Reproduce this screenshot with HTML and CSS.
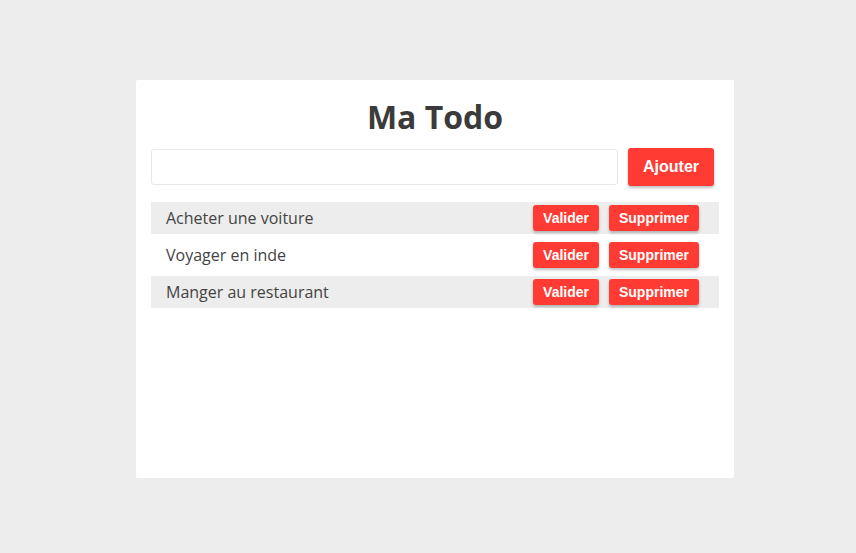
FILE: index.html
```html
<!DOCTYPE html>
<html lang="fr">
<head>
<meta charset="utf-8">
<title>Ma Todo</title>
<link rel="stylesheet" href="styles.css">
</head>
<body>
<main class="card">
  <h1 class="title">Ma Todo</h1>
  <form class="add-form">
    <input class="add-input" type="text">
    <button class="btn btn-add" type="button">Ajouter</button>
  </form>
  <ul class="list">
    <li class="item">
      <span class="item-text">Acheter une voiture</span>
      <span class="actions"><button class="btn btn-small">Valider</button><button class="btn btn-small">Supprimer</button></span>
    </li>
    <li class="item">
      <span class="item-text">Voyager en inde</span>
      <span class="actions"><button class="btn btn-small">Valider</button><button class="btn btn-small">Supprimer</button></span>
    </li>
    <li class="item">
      <span class="item-text">Manger au restaurant</span>
      <span class="actions"><button class="btn btn-small">Valider</button><button class="btn btn-small">Supprimer</button></span>
    </li>
  </ul>
</main>
</body>
</html>
```

FILE: styles.css
```css
* { box-sizing: border-box; }
html, body { margin: 0; padding: 0; }
body {
  background: #ededed;
  font-family: "Open Sans", sans-serif;
  height: 553px;
  padding-top: 80px;
}
.card {
  width: 598px;
  height: 398px;
  margin: 0 auto 0 136px;
  background: #fff;
  border-radius: 2px;
  padding: 15px 15px;
}
.title {
  margin: 0;
  text-align: center;
  font-size: 32px;
  font-weight: 700;
  color: #3b3b3b;
  line-height: 44px;
}
.add-form {
  display: flex;
  align-items: flex-start;
  gap: 10px;
  margin-top: 9px;
  padding-right: 5px;
}
.add-input {
  flex: 1;
  height: 36px;
  margin-top: 1px;
  border: 1px solid #e8e8e8;
  border-radius: 3px;
  outline: none;
  font-family: "Open Sans", sans-serif;
  font-size: 16px;
  padding: 0 10px;
}
.btn {
  background: #ff3b33;
  color: #fff;
  border: none;
  border-radius: 3px;
  font-family: "Liberation Sans", Arial, sans-serif;
  font-weight: 700;
  box-shadow: 0 2px 3px rgba(0, 0, 0, 0.25);
  cursor: pointer;
}
.btn-add {
  height: 38px;
  font-size: 16px;
  padding: 0 15px;
  width: 86px;
}
.list {
  list-style: none;
  margin: 16px 0 0;
  padding: 0;
  display: flex;
  flex-direction: column;
  gap: 5px;
}
.item {
  height: 32px;
  display: flex;
  align-items: center;
  justify-content: space-between;
  padding: 0 20px 0 15px;
  background: #ededed;
  color: #444;
  font-size: 16px;
}
.item:nth-child(even) { background: #fff; }
.actions {
  display: flex;
  gap: 10px;
}
.btn-small {
  height: 26px;
  font-size: 14px;
  padding: 0 10px;
}
```
